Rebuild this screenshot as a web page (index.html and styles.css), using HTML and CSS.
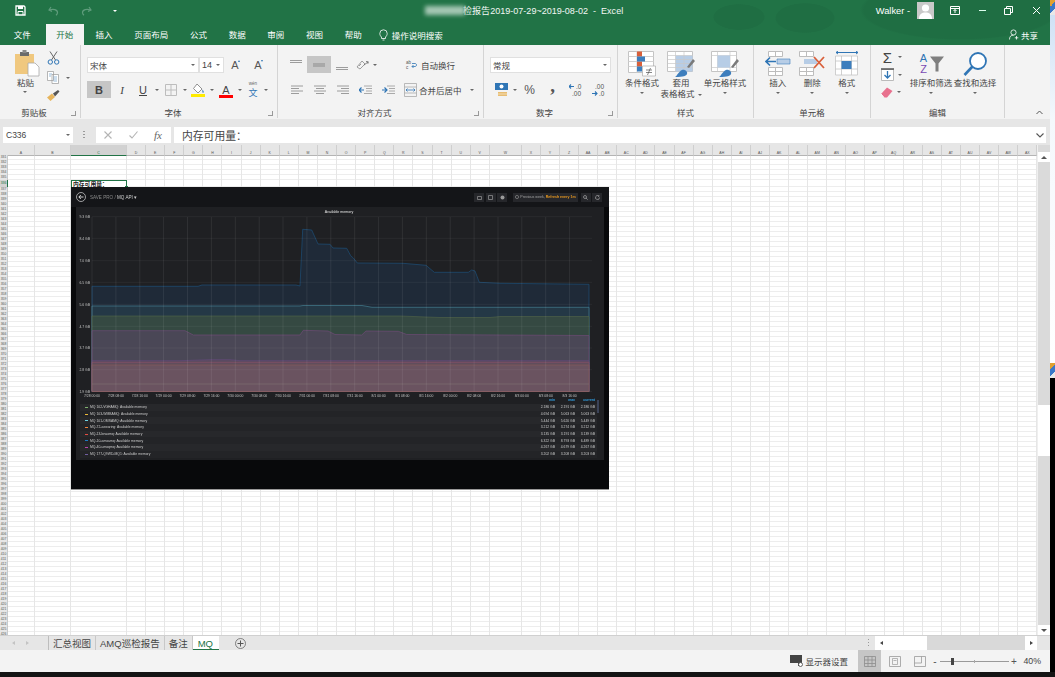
FILE: index.html
```html
<!DOCTYPE html>
<html lang="zh-CN">
<head>
<meta charset="utf-8">
<title>巡检报告2019-07-29~2019-08-02 - Excel</title>
<link rel="stylesheet" href="styles.css">
</head>
<body>
<div class="screen">
<div class="top">
<div class="app">

<header class="head">
  <div class="titlebar">
    <div class="qat">
      <svg class="q-save" width="11" height="11" viewBox="0 0 11 11"><path d="M1 1h8l1 1v8H1z" fill="none" stroke="#fff" stroke-width="1.3"/><path d="M3 1h5v3H3z" fill="#fff"/><path d="M3 10V6.5h5V10" fill="none" stroke="#fff"/></svg>
      <svg class="q-undo" width="11" height="10" viewBox="0 0 11 10"><path d="M3 1 1 4l3 1.5M1.5 4C5 2.5 9.5 3.5 9.5 6.5c0 1-.6 2-1.5 2.7" fill="none" stroke="#5f9c7c" stroke-width="1.2"/></svg>
      <svg class="q-redo" width="11" height="10" viewBox="0 0 11 10"><path d="M8 1l2 3-3 1.5M9.5 4C6 2.5 1.5 3.5 1.5 6.5c0 1 .6 2 1.5 2.7" fill="none" stroke="#5f9c7c" stroke-width="1.2"/></svg>
      <i class="caret white q-more"></i>
    </div>
    <div class="doc"><span class="masked"></span><span class="doc-t">检报告2019-07-29~2019-08-02&nbsp; -&nbsp; Excel</span></div>
    <div class="win">
      <span class="user">Walker -</span>
      <svg class="avatar" width="17" height="17" viewBox="0 0 17 17"><rect width="17" height="17" fill="#c9c9c9"/><circle cx="8.5" cy="6" r="3.6" fill="#fff"/><path d="M2 17c0-5 3-6.5 6.5-6.5S15 12 15 17z" fill="#fff"/></svg>
      <svg class="w-ribbon" width="10" height="9" viewBox="0 0 10 9"><path d="M.5.500h9v8h-9zM.5 2.500h9" fill="none" stroke="#fff"/><path d="M5 7V3.500M3.500 5 5 3.500 6.500 5" fill="none" stroke="#fff"/></svg>
      <svg class="w-min" width="9" height="9" viewBox="0 0 9 9"><path d="M1 4.500h7" stroke="#dfe" stroke-width="1"/></svg>
      <svg class="w-rest" width="9" height="9" viewBox="0 0 9 9"><path d="M.5 2.500h6v6h-6zM2.500 2.500v-2h6v6h-2" fill="none" stroke="#fff"/></svg>
      <svg class="w-close" width="9" height="9" viewBox="0 0 9 9"><path d="M1 1l7 7M8 1 1 8" stroke="#fff"/></svg>
    </div>
  </div>
  <nav class="tabs">
    <span class="tab">文件</span>
    <span class="tab active">开始</span>
    <span class="tab">插入</span>
    <span class="tab">页面布局</span>
    <span class="tab">公式</span>
    <span class="tab">数据</span>
    <span class="tab">审阅</span>
    <span class="tab">视图</span>
    <span class="tab">帮助</span>
    <span class="tell">
      <svg width="9" height="12" viewBox="0 0 9 12"><path d="M2.500 8C1.500 7 .8 6 .8 4.500a3.700 3.700 0 0 1 7.400 0C8.200 6 7.500 7 6.500 8v1.500h-4zM3.500 11h2" fill="none" stroke="#fff" stroke-width=".8"/></svg>
      操作说明搜索
    </span>
    <span class="share">
      <svg width="10" height="11" viewBox="0 0 10 11"><circle cx="4.500" cy="3.500" r="2.600" fill="none" stroke="#fff" stroke-width=".8"/><path d="M.5 10.500c0-3 1.500-4.400 4-4.400M7.500 7v3.500M5.800 8.800h3.500" fill="none" stroke="#fff" stroke-width=".8"/></svg>
      共享
    </span>
  </nav>
</header>

<section class="ribbon">

  <div class="group g1">
    <div class="body clip">
      <div class="paste">
        <svg width="26" height="28" viewBox="0 0 26 28"><path d="M1 5h19v20H1z" fill="#f0c87f"/><path d="M6 3h9v4H6z" fill="#6b6b6b"/><path d="M8.500 1h4v3h-4z" fill="#8a8a8a"/><path d="M14 14h7l4 4v9H14z" fill="#fff" stroke="#a8a8a8" stroke-width=".8"/></svg>
        <span class="lbl">粘贴</span>
        <i class="caret"></i>
      </div>
      <div class="clip-tools">
        <svg width="13" height="14" viewBox="0 0 13 14"><path d="M3 .5 8.500 9M10 .5 4.500 9" stroke="#666" fill="none"/><circle cx="3.300" cy="11" r="2.200" fill="none" stroke="#2f75b5"/><circle cx="9.700" cy="11" r="2.200" fill="none" stroke="#2f75b5"/></svg>
        <span class="copyline">
          <svg width="12" height="13" viewBox="0 0 12 13"><path d="M.5.500h6v9h-6zM5 3.500h6.500v9H5z" fill="#fff" stroke="#9a9a9a" stroke-width=".7"/><path d="M2 3h3M2 5h2M6.500 6h3.500M6.500 8h3.500M6.500 10h3.500" stroke="#6f9fc9" stroke-width=".7"/></svg>
          <i class="caret"></i>
        </span>
        <svg width="13" height="11" viewBox="0 0 13 11"><path d="M0 7.500 5 3.500 8 7 3.500 11z" fill="#e6b45c"/><path d="M6 3.500 11 0l1.500 1.500L8 6.500z" fill="#555"/></svg>
      </div>
    </div>
    <div class="glabel shift">剪贴板<i class="launch"></i></div>
  </div>

  <div class="group g2">
    <div class="body rows2">
      <div class="line">
        <div class="select w112"><span>宋体</span><i class="caret"></i></div>
        <div class="select w25"><span>14</span><i class="caret"></i></div>
        <span class="ib w23 grow-a">A<em class="up"></em></span>
        <span class="ib w23 grow-a">A<em class="down"></em></span>
      </div>
      <div class="line">
        <span class="ib w24 on bold">B</span>
        <span class="ib w22 ital">I</span>
        <span class="ib w20 under">U</span>
        <span class="cb w8"><i class="caret"></i></span>
        <span class="ib w20"><svg width="12" height="12" viewBox="0 0 12 12"><path d="M.5.500h11v11H.5zM6 .5v11M.5 6h11" fill="none" stroke="#bdbdbd"/></svg></span>
        <span class="cb w7"><i class="caret"></i></span>
        <span class="ib w20"><svg width="14" height="14" viewBox="0 0 14 14"><path d="M6 1 11 6 7 10 2.500 5.500z" fill="#fff" stroke="#777" stroke-width=".8"/><path d="M11.500 6.500c1 1.500 1.500 2 1 3s-1.500 0-1-3z" fill="#2f75b5"/><path d="M0 11h14v3H0z" fill="#ffeb00"/></svg></span>
        <span class="cb w7"><i class="caret"></i></span>
        <span class="ib w22 fcolor">A</span>
        <span class="cb w6"><i class="caret"></i></span>
        <span class="ib w20 wen"><small>wén</small><b>文</b></span>
        <span class="cb w6"><i class="caret"></i></span>
      </div>
    </div>
    <div class="glabel shift">字体<i class="launch"></i></div>
  </div>

  <div class="group g3">
    <div class="body rows2">
      <div class="line">
        <span class="ib w22"><svg width="12" height="12" viewBox="0 0 12 12"><path d="M0 1.500h12M0 3.500h12" stroke="#9c9c9c"/></svg></span>
        <span class="ib w24 on"><svg width="12" height="12" viewBox="0 0 12 12"><path d="M0 5h12M0 7h12" stroke="#8b8b8b"/></svg></span>
        <span class="ib w22"><svg width="12" height="12" viewBox="0 0 12 12"><path d="M0 8.500h12M0 10.500h12" stroke="#9c9c9c"/></svg></span>
        <span class="ib w19"><svg width="13" height="11" viewBox="0 0 13 11"><path d="M1 8 6 2l3 3-5 5zM3 7l2-2" fill="none" stroke="#888" stroke-width=".8"/><path d="M8 6l4-3M10 2.500l2.300.3-.5 2" fill="none" stroke="#666" stroke-width=".8"/></svg></span>
        <span class="cb w6"><i class="caret"></i></span>
        <span class="txt wrap"><svg width="11" height="11" viewBox="0 0 11 11"><path d="M6 7.500H9c2 0 2-3 0-3H6M7.500 6 6 7.500 7.500 9" fill="none" stroke="#2f75b5" stroke-width=".8"/></svg><span class="abc">ab<br>c</span>自动换行</span>
      </div>
      <div class="line">
        <span class="ib w23"><svg width="12" height="10" viewBox="0 0 12 10"><path d="M0 1h12M0 3.500h8M0 6h12M0 8.500h8" stroke="#9c9c9c"/></svg></span>
        <span class="ib w23"><svg width="12" height="10" viewBox="0 0 12 10"><path d="M0 1h12M2 3.500h8M0 6h12M2 8.500h8" stroke="#9c9c9c"/></svg></span>
        <span class="ib w23"><svg width="12" height="10" viewBox="0 0 12 10"><path d="M0 1h12M4 3.500h8M0 6h12M4 8.500h8" stroke="#9c9c9c"/></svg></span>
        <span class="ib w23"><svg width="13" height="10" viewBox="0 0 13 10"><path d="M5 1h8M7 3.500h6M7 6h6M5 8.500h8" stroke="#aaa"/><path d="M0 5h5M2.500 2.500 0 5l2.500 2.500" fill="none" stroke="#2f75b5" stroke-width="1.200"/></svg></span>
        <span class="ib w23"><svg width="13" height="10" viewBox="0 0 13 10"><path d="M5 1h8M7 3.500h6M7 6h6M5 8.500h8" stroke="#aaa"/><path d="M0 5h5M2.500 2.500 5 5 2.500 7.500" fill="none" stroke="#2f75b5" stroke-width="1.200"/></svg></span>
        <span class="txt merge"><svg width="13" height="14" viewBox="0 0 13 14"><path d="M.5.500h12v13H.5zM.5 4h12M.5 10h12" fill="none" stroke="#aaa" stroke-width=".8"/><path d="M2 7h9M3.500 5.500 2 7l1.500 1.500M9.500 5.500 11 7 9.500 8.500" fill="none" stroke="#2f75b5" stroke-width=".8"/></svg>合并后居中<i class="caret"></i></span>
      </div>
    </div>
    <div class="glabel shift">对齐方式<i class="launch"></i></div>
  </div>

  <div class="group g4">
    <div class="body rows2">
      <div class="line"><div class="select w121"><span>常规</span><i class="caret"></i></div></div>
      <div class="line">
        <span class="ib w22"><svg width="13" height="14" viewBox="0 0 13 14"><path d="M0 0h13v7H0z" fill="#2f75b5"/><circle cx="6.500" cy="3.500" r="2" fill="#fff"/><path d="M3 9h9v4H3z" fill="#e8bd72"/><path d="M3 11h9" stroke="#fff" stroke-width=".5"/></svg></span>
        <span class="cb w6"><i class="caret"></i></span>
        <span class="ib w23 pct">%</span>
        <span class="ib w23 comma">,</span>
        <span class="ib w23"><svg class="dec" width="14" height="14" viewBox="0 0 14 14"><path d="M0 3.500h5M2 1.500 0 3.500l2 2" fill="none" stroke="#2f75b5" stroke-width="1.100"/><text x="7" y="6" class="dectxt">.0</text><text x="3" y="13" class="dectxt">.00</text></svg></span>
        <span class="ib w23"><svg class="dec" width="14" height="14" viewBox="0 0 14 14"><text x="3" y="6" class="dectxt">.00</text><path d="M0 10.500h5M3 8.500l2 2-2 2" fill="none" stroke="#2f75b5" stroke-width="1.100"/><text x="7" y="13" class="dectxt">.0</text></svg></span>
      </div>
    </div>
    <div class="glabel shift">数字<i class="launch"></i></div>
  </div>

  <div class="group g5">
    <div class="body bigs">
      <div class="big w40">
        <svg width="28" height="26" viewBox="0 0 28 26"><path d="M.5.500h25v21H.5z" fill="#fff" stroke="#c4c4c4"/><path d="M9 .5v21M.5 5.500h25M.5 10.500h25M.5 15.500h25" stroke="#d2d2d2"/><path d="M9 .5h5v5H9zM9 10.500h5v5H9z" fill="#d9603b"/><path d="M9 5.500h8v5H9zM9 15.500h5v5H9z" fill="#3d7ebd"/><path d="M14.500 15h13v10h-13z" fill="#fff" stroke="#aaa" stroke-width=".7"/><path d="M18 19h6M18 21.500h6M22.500 17l-3 7" stroke="#555" stroke-width=".7"/></svg>
        <span class="lbl">条件格式</span><i class="caret"></i>
      </div>
      <div class="big w38">
        <svg width="28" height="26" viewBox="0 0 28 26"><path d="M.5.500h25v20H.5z" fill="#fff" stroke="#c4c4c4"/><path d="M8.500 4.500h17v16h-17z" fill="#b7cde6"/><path d="M.5 4.500h25M.5 8.500h25M.5 12.500h25M.5 16.500h25M8.500.5v20M17 .5v20" stroke="#c9c9c9" stroke-width=".7"/><path d="M20 16l6-8 2 2-6 7z" fill="#7a7a7a"/><path d="M8 26c2-1 4-6 7-7s6 2 5 4-3 3-12 3z" fill="#3d7ebd"/></svg>
        <span class="lbl">套用</span><span class="lbl">表格格式<i class="caret in"></i></span>
      </div>
      <div class="big w50">
        <svg width="28" height="26" viewBox="0 0 28 26"><path d="M.5.500h25v20H.5z" fill="#fff" stroke="#c4c4c4"/><path d="M.5 4.500h25M.5 16.500h25M6.500.5v20M19 .5v20" stroke="#c9c9c9" stroke-width=".7"/><path d="M6.500 4.500H19v12H6.500z" fill="#b7cde6"/><path d="M20 16l6-8 2 2-6 7z" fill="#7a7a7a"/><path d="M8 26c2-1 4-6 7-7s6 2 5 4-3 3-12 3z" fill="#3d7ebd"/></svg>
        <span class="lbl">单元格样式</span><i class="caret"></i>
      </div>
    </div>
    <div class="glabel">样式</div>
  </div>

  <div class="group g6">
    <div class="body bigs">
      <div class="big w345">
        <svg width="26" height="26" viewBox="0 0 26 26"><path d="M3.500.5h14v5h-14zM3.500 16.500h14v8h-14zM10.500 16.500v8M3.500 20.500h14M10.500.5v5" fill="#fff" stroke="#bdbdbd"/><path d="M12 8h13v5H12z" fill="#b7cde6" stroke="#3d7ebd" stroke-width=".6"/><path d="M11 10.500H1M5 6.500l-4 4 4 4" fill="none" stroke="#2f75b5" stroke-width="1.600"/></svg>
        <span class="lbl">插入</span><i class="caret"></i>
      </div>
      <div class="big w345">
        <svg width="26" height="26" viewBox="0 0 26 26"><path d="M.5.500h14v5H.5zM.5 16.500h14v8H.5zM7.500 16.500v8M.5 20.500h14M7.500.5v5" fill="#fff" stroke="#bdbdbd"/><path d="M5 8h13v5H5z" fill="#b7cde6"/><path d="M15 6l10 11M25 6 15 17" stroke="#d9603b" stroke-width="1.800"/></svg>
        <span class="lbl">删除</span><i class="caret"></i>
      </div>
      <div class="big w345">
        <svg width="24" height="26" viewBox="0 0 24 26"><path d="M1 1.500h22M3 0 1 1.500 3 3M21 0l2 1.500L21 3" fill="none" stroke="#2f75b5"/><path d="M.5 5h22v19H.5zM.5 10h22M.5 18h22M6.500 5v19M16.500 5v19" fill="#fff" stroke="#c4c4c4" stroke-width=".8"/><path d="M6.500 10h10v8h-10z" fill="#3d7ebd"/></svg>
        <span class="lbl">格式</span><i class="caret"></i>
      </div>
    </div>
    <div class="glabel">单元格</div>
  </div>

  <div class="group g7">
    <div class="body bigs">
      <div class="stack">
        <span class="sline"><b class="sigma">Σ</b><i class="caret"></i></span>
        <span class="sline"><svg width="13" height="13" viewBox="0 0 13 13"><path d="M.5 1.500h12v11H.5z" fill="#fff" stroke="#bbb"/><path d="M0 1h13" stroke="#555" stroke-width="1.500"/><path d="M6.500 3v7M3.500 7l3 3 3-3" fill="none" stroke="#2f75b5" stroke-width="1.300"/></svg><i class="caret"></i></span>
        <span class="sline"><svg width="12" height="11" viewBox="0 0 12 11"><path d="M0 7 6 .5 11.500 4 6 10.500H3z" fill="#e8718e"/><path d="M0 7l3 3.500" stroke="#fff"/></svg><i class="caret"></i></span>
      </div>
      <div class="big w44">
        <span class="sorticon"><span class="az"><b class="a">A</b><b class="z">Z</b></span><svg width="14" height="15" viewBox="0 0 14 15"><path d="M0 0h14L8.500 7v8h-3V7z" fill="#7f7f7f"/></svg></span>
        <span class="lbl">排序和筛选</span><i class="caret"></i>
      </div>
      <div class="big w44">
        <svg width="25" height="25" viewBox="0 0 25 25"><circle cx="15" cy="9.500" r="8" fill="#fff" stroke="#2f75b5" stroke-width="1.800"/><path d="M9.500 15 1.500 23.500" stroke="#2f75b5" stroke-width="2.600"/></svg>
        <span class="lbl">查找和选择</span><i class="caret"></i>
      </div>
    </div>
    <div class="glabel">编辑</div>
  </div>

  <div class="collapse">
    <svg width="7" height="5" viewBox="0 0 7 5"><path d="M.5 4 3.500 1l3 3" fill="none" stroke="#555"/></svg>
  </div>
</section>

<section class="fbar">
  <div class="namebox"><span>C336</span><i class="caret"></i></div>
  <span class="dots"></span>
  <div class="fbtns">
    <svg width="8" height="8" viewBox="0 0 8 8"><path d="M.5.500l7 7M7.500.5l-7 7" stroke="#b4b4b4" stroke-width="1.100"/></svg>
    <svg width="9" height="8" viewBox="0 0 9 8"><path d="M.5 4.500 3 7 8.500.5" fill="none" stroke="#b4b4b4" stroke-width="1.100"/></svg>
    <em>fx</em>
  </div>
  <div class="finput"><span>内存可用量：</span>
    <svg width="8" height="5" viewBox="0 0 8 5"><path d="M.5.500 4 4 7.500.5" fill="none" stroke="#555" stroke-width="1.100"/></svg>
  </div>
</section>

<section class="work">
  <div class="sheet">
    <div class="rowsl">
      <div class="corner"></div>
      <div class="row"><b>331</b></div><div class="row"><b>332</b></div><div class="row"><b>333</b></div><div class="row"><b>334</b></div><div class="row"><b>335</b></div>
      <div class="row tall"><b>336</b></div>
      <div class="row"><b>337</b></div><div class="row"><b>338</b></div><div class="row"><b>339</b></div><div class="row"><b>340</b></div>
      <div class="row"><b>341</b></div><div class="row"><b>342</b></div><div class="row"><b>343</b></div><div class="row"><b>344</b></div><div class="row"><b>345</b></div><div class="row"><b>346</b></div><div class="row"><b>347</b></div><div class="row"><b>348</b></div><div class="row"><b>349</b></div><div class="row"><b>350</b></div>
      <div class="row"><b>351</b></div><div class="row"><b>352</b></div><div class="row"><b>353</b></div><div class="row"><b>354</b></div><div class="row"><b>355</b></div><div class="row"><b>356</b></div><div class="row"><b>357</b></div><div class="row"><b>358</b></div><div class="row"><b>359</b></div><div class="row"><b>360</b></div>
      <div class="row"><b>361</b></div><div class="row"><b>362</b></div><div class="row"><b>363</b></div><div class="row"><b>364</b></div><div class="row"><b>365</b></div><div class="row"><b>366</b></div><div class="row"><b>367</b></div><div class="row"><b>368</b></div><div class="row"><b>369</b></div><div class="row"><b>370</b></div>
      <div class="row"><b>371</b></div><div class="row"><b>372</b></div><div class="row"><b>373</b></div><div class="row"><b>374</b></div><div class="row"><b>375</b></div><div class="row"><b>376</b></div><div class="row"><b>377</b></div><div class="row"><b>378</b></div><div class="row"><b>379</b></div><div class="row"><b>380</b></div>
      <div class="row"><b>381</b></div><div class="row"><b>382</b></div><div class="row"><b>383</b></div><div class="row"><b>384</b></div><div class="row"><b>385</b></div><div class="row"><b>386</b></div><div class="row"><b>387</b></div><div class="row"><b>388</b></div><div class="row"><b>389</b></div><div class="row"><b>390</b></div>
      <div class="row"><b>391</b></div><div class="row"><b>392</b></div><div class="row"><b>393</b></div><div class="row"><b>394</b></div><div class="row"><b>395</b></div><div class="row"><b>396</b></div><div class="row"><b>397</b></div><div class="row"><b>398</b></div><div class="row"><b>399</b></div><div class="row"><b>400</b></div>
      <div class="row"><b>401</b></div><div class="row"><b>402</b></div><div class="row"><b>403</b></div><div class="row"><b>404</b></div><div class="row"><b>405</b></div><div class="row"><b>406</b></div><div class="row"><b>407</b></div><div class="row"><b>408</b></div><div class="row"><b>409</b></div><div class="row"><b>410</b></div>
      <div class="row"><b>411</b></div><div class="row"><b>412</b></div><div class="row"><b>413</b></div><div class="row"><b>414</b></div><div class="row"><b>415</b></div><div class="row"><b>416</b></div><div class="row"><b>417</b></div><div class="row"><b>418</b></div><div class="row"><b>419</b></div><div class="row"><b>420</b></div>
      <div class="row"><b>421</b></div><div class="row"><b>422</b></div><div class="row"><b>423</b></div><div class="row"><b>424</b></div><div class="row"><b>425</b></div><div class="row"><b>426</b></div>
    </div>
    <div class="colsl">
      <div class="col ca"><span>A</span></div><div class="col cb2"><span>B</span></div><div class="col cc"><span class="cur">C</span></div>
      <div class="col"><span>D</span></div><div class="col"><span>E</span></div><div class="col"><span>F</span></div><div class="col"><span>G</span></div><div class="col"><span>H</span></div><div class="col"><span>I</span></div><div class="col"><span>J</span></div><div class="col"><span>K</span></div><div class="col"><span>L</span></div><div class="col"><span>M</span></div><div class="col"><span>N</span></div><div class="col"><span>O</span></div><div class="col"><span>P</span></div><div class="col"><span>Q</span></div><div class="col"><span>R</span></div><div class="col"><span>S</span></div><div class="col"><span>T</span></div><div class="col"><span>U</span></div><div class="col"><span>V</span></div>
      <div class="col cw"><span>W</span></div>
      <div class="col"><span>X</span></div><div class="col"><span>Y</span></div><div class="col"><span>Z</span></div><div class="col"><span>AA</span></div><div class="col"><span>AB</span></div><div class="col"><span>AC</span></div><div class="col"><span>AD</span></div><div class="col"><span>AE</span></div><div class="col"><span>AF</span></div><div class="col"><span>AG</span></div><div class="col"><span>AH</span></div><div class="col"><span>AI</span></div><div class="col"><span>AJ</span></div><div class="col"><span>AK</span></div><div class="col"><span>AL</span></div><div class="col"><span>AM</span></div><div class="col"><span>AN</span></div><div class="col"><span>AO</span></div><div class="col"><span>AP</span></div><div class="col"><span>AQ</span></div><div class="col"><span>AR</span></div><div class="col"><span>AS</span></div><div class="col"><span>AT</span></div><div class="col"><span>AU</span></div><div class="col"><span>AV</span></div><div class="col"><span>AW</span></div><div class="col"><span>AX</span></div>
    </div>

    <div class="selcell">内存可用量：<i></i></div>

    <div class="pic">
      <div class="dhead">
        <svg class="back" width="10" height="10" viewBox="0 0 10 10"><circle cx="5" cy="5" r="4.500" fill="none" stroke="#d8d8d8" stroke-width=".7"/><path d="M7.500 5H3M4.800 3 2.800 5l2 2" fill="none" stroke="#e8e8e8" stroke-width=".9"/></svg>
        <span class="crumb">SAVE PRO / <b>MQ API ▾</b></span>
        <span class="dbtn b1"><svg width="5" height="5" viewBox="0 0 5 5"><path d="M.5 4.500v-3h4v3z" fill="none" stroke="#9a9a9a" stroke-width=".7"/></svg></span>
        <span class="dbtn"><svg width="5" height="5" viewBox="0 0 5 5"><path d="M.5.500h4v4h-4z" fill="none" stroke="#9a9a9a" stroke-width=".7"/></svg></span>
        <span class="dbtn"><svg width="5" height="5" viewBox="0 0 5 5"><circle cx="2.500" cy="2.500" r="2" fill="#9a9a9a"/></svg></span>
        <span class="dbtn picker"><svg width="4" height="4" viewBox="0 0 4 4"><circle cx="2" cy="2" r="1.600" fill="none" stroke="#9a9a9a" stroke-width=".6"/></svg>Previous week, <b>Refresh every 1m</b></span>
        <span class="dbtn"><svg width="5" height="5" viewBox="0 0 5 5"><circle cx="2" cy="2" r="1.500" fill="none" stroke="#bbb" stroke-width=".6"/><path d="M3 3l1.700 1.700" stroke="#bbb" stroke-width=".6"/></svg></span>
        <span class="dbtn"><svg width="5" height="5" viewBox="0 0 5 5"><path d="M4.500 2.500a2 2 0 1 1-.7-1.500M4 .3V1.300H3" fill="none" stroke="#bbb" stroke-width=".6"/></svg></span>
      </div>
      <div class="panel">
        <svg class="chart" width="528" height="190" viewBox="76 207 528 190">
          <text x="339" y="212.500" class="ptitle">Available memory</text>
          <path class="a1" d="M92 286.300H198L202 285H296L300 286L302.700 229.300L311.700 230L318 244L330 244.300L333 248L346.700 248.300L350.700 255.700L353.300 258L357.300 263L403 263.300L426 265.300L434.300 272.300L468.300 272.300L471.700 270L475 271L479.300 282.300L500 283.300L589 284.300V391.500H92Z"/>
          <path class="a2" d="M92 306H300L303 305.500H362L372 307.300H589V391.500H92Z"/>
          <path class="a3" d="M92 316H400L440 317.500H490L500 316.500H589V391.500H92Z"/>
          <path class="a4" d="M92 330.700H185L193.300 335H300L303.300 330.300L328 331L335 334.500L361.700 335L366 331L398.300 331.300L406.700 334.500L589 335.500V391.500H92Z"/>
          <path class="a5" d="M92 360.700H180L210 359.700H230L240 360.700H589V391.500H92Z"/>
          <path class="a6" d="M92 362.300H589V391.500H92Z"/>
          <path class="a7" d="M92 365H589V391.500H92Z"/>
          <path class="bl" d="M92 384H589"/>
          <path class="gh" d="M92 216.700H592M92 238.300H592M92 260.700H592M92 282.300H592M92 304.300H592M92 326.300H592M92 348H592M92 369.700H592M92 391.500H592"/>
          <path class="gv" d="M92 217V391.500M115.900 217V391.500M139.800 217V391.500M163.600 217V391.500M187.500 217V391.500M211.400 217V391.500M235.300 217V391.500M259.200 217V391.500M283 217V391.500M306.900 217V391.500M330.800 217V391.500M354.700 217V391.500M378.600 217V391.500M402.400 217V391.500M426.300 217V391.500M450.200 217V391.500M474.100 217V391.500M498 217V391.500M521.800 217V391.500M545.700 217V391.500M569.600 217V391.500"/>
          <g class="ylab">
            <text x="90" y="218">9.3 GB</text><text x="90" y="239.600">8.4 GB</text><text x="90" y="262">7.0 GB</text><text x="90" y="283.600">6.5 GB</text><text x="90" y="305.600">5.6 GB</text><text x="90" y="327.600">4.7 GB</text><text x="90" y="349.300">3.7 GB</text><text x="90" y="371">2.8 GB</text><text x="90" y="392.500">1.9 GB</text>
          </g>
          <g class="xlab">
            <text x="92" y="396.500">7/28 00:00</text><text x="115.900" y="396.500">7/28 08:00</text><text x="139.800" y="396.500">7/28 16:00</text><text x="163.600" y="396.500">7/29 00:00</text><text x="187.500" y="396.500">7/29 08:00</text><text x="211.400" y="396.500">7/29 16:00</text><text x="235.300" y="396.500">7/30 00:00</text><text x="259.200" y="396.500">7/30 08:00</text><text x="283" y="396.500">7/30 16:00</text><text x="306.900" y="396.500">7/31 00:00</text><text x="330.800" y="396.500">7/31 08:00</text><text x="354.700" y="396.500">7/31 16:00</text><text x="378.600" y="396.500">8/1 00:00</text><text x="402.400" y="396.500">8/1 08:00</text><text x="426.300" y="396.500">8/1 16:00</text><text x="450.200" y="396.500">8/2 00:00</text><text x="474.100" y="396.500">8/2 08:00</text><text x="498" y="396.500">8/2 16:00</text><text x="521.800" y="396.500">8/3 00:00</text><text x="545.700" y="396.500">8/3 08:00</text><text x="569.600" y="396.500">8/3 16:00</text>
          </g>
        </svg>
        <div class="legend">
          <div class="lg-head"><span>min</span><span>max</span><span>current</span></div>
          <div class="lg"><i class="s-green"></i><em>MQ 102-VGHAMQ: Available memory</em><span>2.186 GB</span><span>2.191 GB</span><span>2.186 GB</span></div>
          <div class="lg"><i class="s-yellow"></i><em>MQ 103-WMBAMQ: Available memory</em><span>4.694 GB</span><span>5.063 GB</span><span>5.063 GB</span></div>
          <div class="lg"><i class="s-cyan"></i><em>MQ 101-OMSAMQ: Available memory</em><span>5.444 GB</span><span>5.620 GB</span><span>5.449 GB</span></div>
          <div class="lg"><i class="s-orange"></i><em>MQ-72-aewaring: Available memory</em><span>3.212 GB</span><span>3.274 GB</span><span>3.212 GB</span></div>
          <div class="lg"><i class="s-red"></i><em>MQ-13-bnaomq: Available memory</em><span>3.135 GB</span><span>3.191 GB</span><span>3.139 GB</span></div>
          <div class="lg"><i class="s-blue"></i><em>MQ-10-amoamq: Available memory</em><span>6.322 GB</span><span>8.793 GB</span><span>6.489 GB</span></div>
          <div class="lg"><i class="s-purple"></i><em>MQ-40-umoqmq: Available memory</em><span>4.267 GB</span><span>4.679 GB</span><span>4.267 GB</span></div>
          <div class="lg"><i class="s-violet"></i><em>MQ 177-Q9WD-MQ1: Available memory</em><span>3.202 GB</span><span>3.208 GB</span><span>3.203 GB</span></div>
          <i class="lg-scroll"></i>
        </div>
      </div>
    </div>
  </div>
  <div class="vscroll">
    <span class="sbtn"><i class="tri-up"></i></span>
    <span class="vthumb"></span>
    <span class="sbtn end"><i class="tri-down"></i></span>
  </div>
</section>

<section class="sheetbar">
  <div class="snav"><i class="tri-l"></i><i class="tri-r"></i></div>
  <span class="stab">汇总视图</span>
  <span class="stab">AMQ巡检报告</span>
  <span class="stab">备注</span>
  <span class="stab cur">MQ</span>
  <svg class="addsheet" width="11" height="11" viewBox="0 0 11 11"><circle cx="5.500" cy="5.500" r="5" fill="none" stroke="#666" stroke-width=".8"/><path d="M5.500 2.500v6M2.500 5.500h6" stroke="#555"/></svg>
  <span class="hdots"></span>
  <div class="hscroll">
    <span class="hbtn"><i class="tri-l dark"></i></span>
    <span class="hthumb"></span>
    <span class="hbtn right"><i class="tri-r dark"></i></span>
  </div>
</section>

<footer class="status">
  <span class="display">
    <svg width="14" height="12" viewBox="0 0 14 12"><path d="M0 0h12v8H0z" fill="#444"/><path d="M8 8h4v3H8z" fill="#444"/><circle cx="10.500" cy="9.500" r="2" fill="#fff" stroke="#444" stroke-width=".8"/></svg>
    显示器设置
  </span>
  <span class="view on"><svg width="12" height="11" viewBox="0 0 12 11"><path d="M.5.500h11v10H.5zM4 .5v10M8 .5v10M.5 4h11M.5 7.500h11" fill="none" stroke="#8d8d8d" stroke-width=".8"/></svg></span>
  <span class="view"><svg width="12" height="11" viewBox="0 0 12 11"><path d="M.5.500h11v10H.5z" fill="none" stroke="#999" stroke-width=".8"/><path d="M3.500 2.500h5v6h-5zM4.500 4.500h3" fill="none" stroke="#999" stroke-width=".7"/></svg></span>
  <span class="view"><svg width="12" height="11" viewBox="0 0 12 11"><path d="M.5.500h11v10H.5zM.5 7h7V.5" fill="none" stroke="#999" stroke-width=".8"/></svg></span>
  <span class="zm">-</span>
  <span class="slider"><i class="tick"></i><i class="knob"></i></span>
  <span class="zm">+</span>
  <span class="pct40">40%</span>
</footer>
</div>

<aside class="edge">
  <span class="edge-i"></span>
  <span class="edge-g"></span>
  <span class="edge-i"></span>
  <span class="edge-k"></span>
</aside>
</div>
<div class="taskbar"></div>
</div>
</body>
</html>
```

FILE: styles.css
```css
* { box-sizing: border-box; }
html, body { margin: 0; padding: 0; }
body { width: 1055px; height: 677px; overflow: hidden; background: #111; font-family: "Liberation Sans", "Noto Sans CJK SC", sans-serif; color: #444; }
.screen { width: 1055px; height: 677px; display: flex; flex-direction: column; }
.top { display: flex; height: 672px; }
.app { width: 1050px; height: 672px; display: flex; flex-direction: column; background: #f3f3f3; }
.taskbar { height: 5px; background: #141414; }
.edge { width: 5px; display: flex; flex-direction: column; }
.edge-i { height: 15px; background: linear-gradient(135deg, #e0a030 0 35%, #3a78c8 35% 70%, #e8e8e8 70%); }
.edge-g { height: 348px; background: linear-gradient(#cfe1f5, #f4f8fc 30%, #fff); }
.edge-k { flex: 1; background: #000; }

/* caret */
.caret { display: inline-block; width: 0; height: 0; border-left: 2px solid transparent; border-right: 2px solid transparent; border-top: 2.5px solid #666; flex: none; }
.caret.white { border-top-color: #fff; }
.caret.in { margin-left: 3px; vertical-align: middle; }

/* header */
.head { height: 45px; color: #fff; background-color: #217346; background-image: radial-gradient(ellipse 26px 13px at 739px 17px, #1f6e43 0 96%, transparent), radial-gradient(ellipse 30px 15px at 805px 18px, #1f6e43 0 96%, transparent), radial-gradient(ellipse 100px 30px at 960px 10px, #1f6e43 0 96%, transparent); }
.titlebar { height: 24px; display: flex; align-items: center; padding-bottom: 3px; }
.qat { display: flex; align-items: center; width: 425px; padding-left: 15px; }
.q-undo { margin-left: 22px; }
.q-redo { margin-left: 22px; }
.q-more { margin-left: 21px; }
.doc { display: flex; align-items: center; flex: 1; font-size: 9.050px; color: #f2f7f4; }
.masked { width: 40px; height: 9px; background: #a5c7b4; filter: blur(2px); }
.doc-t { white-space: nowrap; margin-left: -2px; }
.win { display: flex; align-items: center; font-size: 9.300px; padding-right: 9px; }
.user { margin-right: 7px; }
.avatar { margin-right: 16px; }
.w-ribbon { margin-right: 18px; }
.w-min { margin-right: 17px; }
.w-rest { margin-right: 19px; }
.w-close { margin-right: 0; }

.tabs { height: 21px; display: flex; align-items: stretch; padding-left: 3px; font-size: 8.500px; font-family: "Noto Sans CJK SC", sans-serif; }
.tab { padding: 0 10.850px; display: flex; align-items: center; line-height: 1; }
.tab.active { background: #f3f3f3; color: #217346; margin-left: 4px; width: 38px; padding: 0; justify-content: center; }
.tab.active + .tab { margin-left: 1px; }
.tell { display: flex; align-items: center; gap: 4px; margin-left: 6px; }
.share { display: flex; align-items: center; gap: 2px; margin-left: auto; margin-right: 12px; }

/* ribbon */
.ribbon { height: 74px; display: flex; background: #f3f3f3; font-family: "Noto Sans CJK SC", sans-serif; font-size: 8.500px; color: #444; }
.group { display: flex; flex-direction: column; border-right: 1px solid #d4d4d4; margin-bottom: 1px; }
.g1 { width: 81px; }
.g2 { width: 197px; }
.g3 { width: 206px; }
.g4 { width: 134px; }
.g5 { width: 136px; }
.g6 { width: 117px; }
.g7 { width: 134px; }
.body { height: 63px; }
.glabel { flex: 1; position: relative; text-align: center; line-height: 11px; color: #444; }
.glabel.shift { padding-right: 12px; }
.launch { position: absolute; right: 4px; bottom: 2px; width: 5px; height: 5px; border-left: 1px solid #999; border-top: 1px solid #999; transform: rotate(180deg); }
.collapse { flex: 1; display: flex; align-items: flex-end; justify-content: flex-end; padding: 0 7px 4px 0; }

.clip { display: flex; }
.paste { width: 45px; padding: 4px 0 0 14px; display: flex; flex-direction: column; align-items: flex-start; }
.paste .lbl { margin: 0 0 0 3px; line-height: 11px; }
.paste .caret { margin: 3px 0 0 9px; }
.clip-tools { display: flex; flex-direction: column; gap: 6px; padding: 6px 0 0 2px; }
.copyline { display: flex; align-items: center; gap: 7px; }

.rows2 { display: flex; flex-direction: column; gap: 8px; padding-top: 11px; }
.line { display: flex; height: 17px; align-items: center; }
.g2 .rows2, .g4 .rows2 { padding-left: 6px; }
.g3 .rows2 { padding-left: 7px; }
.select { height: 16px; background: #fff; border: 1px solid #e0e0e0; display: flex; align-items: center; justify-content: space-between; padding: 0 3px 0 2px; color: #444; font-size: 8.500px; }
.w112 { width: 112px; }
.w25 { width: 25px; font-family: "Liberation Sans", sans-serif; font-size: 9px; }
.w121 { width: 121px; }
.ib, .cb { display: flex; align-items: center; justify-content: center; height: 17px; flex: none; }
.w6 { width: 6px; } .w7 { width: 7px; } .w8 { width: 8px; } .w19 { width: 19px; } .w20 { width: 20px; } .w22 { width: 22px; } .w23 { width: 23px; } .w24 { width: 24px; }
.on { background: #c6c6c6; }
.grow-a { font-family: "Liberation Sans", sans-serif; font-size: 11px; color: #555; }
.up, .down { width: 0; height: 0; border-left: 1.500px solid transparent; border-right: 1.500px solid transparent; margin: -8px 0 0 -1px; }
.up { border-bottom: 2px solid #2f75b5; }
.down { border-top: 2px solid #2f75b5; }
.bold { font: 700 11px "Liberation Sans", sans-serif; color: #444; }
.ital { font: italic 11px "Liberation Serif", serif; color: #444; }
.under { font: 11px "Liberation Sans", sans-serif; text-decoration: underline; color: #444; }
.fcolor { font: 11px "Liberation Sans", sans-serif; color: #444; background: linear-gradient(#f00, #f00) center 14px / 14px 3px no-repeat; }
.wen { flex-direction: column; line-height: 1; color: #2f75b5; }
.wen small { font: 4.500px "Liberation Sans", sans-serif; color: #666; }
.wen b { font: 9px "Noto Sans CJK SC", sans-serif; }
.txt { display: flex; align-items: center; white-space: nowrap; }
.wrap { margin-left: 28px; }
.abc { width: 0; overflow: visible; font: 4.500px/5px "Liberation Sans", sans-serif; margin: 0 15px 0 -11px; color: #555; }
.merge { margin-left: 4px; gap: 2px; }
.merge .caret { margin-left: 6px; }
.pct { font: 12px "Liberation Sans", sans-serif; color: #555; }
.comma { font: 700 19px/1 "Liberation Serif", serif; color: #555; padding-bottom: 9px; }
.dectxt { font: 6.500px "Liberation Sans", sans-serif; fill: #555; }

.bigs { display: flex; padding-top: 6px; }
.g5 .bigs { padding-left: 4px; }
.g6 .bigs { padding-left: 6.500px; }
.big { display: flex; flex-direction: column; align-items: center; flex: none; white-space: nowrap; }
.big svg, .sorticon { height: 26px; flex: none; }
.big .lbl { line-height: 11px; height: 11px; }
.big > .caret { margin-top: 4px; }
.w40 { width: 40px; } .w38 { width: 38px; } .w50 { width: 50px; } .w345 { width: 34.500px; } .w44 { width: 44px; }
.stack { width: 38px; margin-top: -2.500px; padding-left: 10px; display: flex; flex-direction: column; }
.sline { height: 17.500px; display: flex; align-items: center; gap: 4px; }
.sigma { font: 400 15px "Liberation Sans", sans-serif; color: #444; width: 13px; text-align: center; }
.sorticon { display: flex; align-items: center; gap: 1px; }
.az { display: flex; flex-direction: column; width: 11px; font: 700 11px/11px "Liberation Sans", sans-serif; text-align: center; }
.az .a { color: #2f75b5; font-weight: 400; }
.az .z { color: #7a4bb5; font-weight: 400; }

/* formula bar */
.fbar { height: 26px; background: #e6e6e6; display: flex; align-items: flex-start; padding: 8px 4px 0 3px; }
.namebox { width: 70px; height: 16px; background: #fff; display: flex; align-items: center; justify-content: space-between; padding: 0 3px; font-size: 8.500px; color: #444; }
.dots { width: 2px; height: 8px; margin: 4px 11px 0 10px; background: repeating-linear-gradient(#9a9a9a 0 1px, transparent 1px 3px); }
.fbtns { width: 75px; height: 16px; background: #fff; display: flex; align-items: center; justify-content: space-between; padding: 0 9px 0 8px; }
.fbtns em { font: italic 11px "Liberation Serif", serif; color: #666; }
.finput { flex: 1; height: 16px; margin-left: 3px; background: #fff; display: flex; align-items: center; justify-content: space-between; padding: 0 2px 0 8px; font: 10.800px "Noto Sans CJK SC", sans-serif; color: #444; }

/* worksheet */
.work { height: 490px; display: flex; background: #fff; }
.sheet { position: relative; width: 1037px; height: 490px; overflow: hidden; display: grid; background: #fff; }
.rowsl, .colsl { grid-area: 1 / 1; }
.corner { height: 10px; width: 8px; background: #e6e6e6; }
.row { height: 5px; border-bottom: 1px solid #ededed; }
.row b { display: block; width: 8px; height: 5px; background: #e6e6e6; font: 400 3.400px/5px "Liberation Sans", sans-serif; color: #555; text-align: center; border-right: 1px solid #c9c9c9; }
.row.tall { height: 7px; }
.row.tall b { height: 7px; line-height: 7px; background: #d2d2d2; border-right: 1px solid #217346; color: #217346; }
.colsl { display: flex; padding-left: 8px; height: 490px; }
.col { width: 19.100px; flex: none; border-right: 1px solid #e6e6e6; }
.col.ca { width: 27px; } .col.cb2 { width: 36px; } .col.cc { width: 56px; } .col.cw { width: 32px; }
.col span { display: block; height: 11px; margin-right: -1px; padding-top: 6px; background: #e6e6e6; border-bottom: 1px solid #b4b4b4; border-right: 1px solid #cfcfcf; font: 3.500px/4px "Liberation Sans", sans-serif; color: #555; text-align: center; }
.col span.cur { background: #d2d2d2; border-bottom: 1px solid #217346; color: #217346; }
.selcell { position: absolute; left: 71px; top: 35px; width: 56px; height: 8px; border: 1px solid #217346; background: #fff; font: 700 5.800px/6px "Noto Sans CJK SC", sans-serif; color: #222; padding-left: 1px; }
.selcell i { position: absolute; right: -2px; bottom: -2px; width: 3px; height: 3px; background: #217346; }

/* picture */
.pic { position: absolute; left: 71px; top: 42px; width: 538px; height: 303px; background: #08090b; border-bottom: 1px solid #999; filter: blur(.3px); }
.dhead { height: 20px; background: #141518; display: flex; align-items: center; padding: 0 7px 0 5px; font-size: 4.600px; color: #8a8a8a; }
.back { margin-right: 4px; }
.crumb { flex: 1; white-space: nowrap; }
.crumb b { font-weight: 400; color: #cfcfcf; }
.dbtn { height: 9px; min-width: 10px; margin-left: 1.500px; background: #26272b; display: flex; align-items: center; justify-content: center; }
.b1 { margin-left: 0; }
.picker { width: 65px; margin: 0 1px 0 6px; gap: 1px; font-size: 3.600px; color: #a5a5a5; white-space: nowrap; }
.picker b { color: #eb9a1f; font-weight: 700; }
.panel { margin: 0 5px; width: 528px; height: 253px; background: #1f2023; }
.chart { display: block; }
.ptitle { font: 3.600px "Liberation Sans", sans-serif; fill: #e4e4e4; text-anchor: middle; }
.a1 { fill: #1f2a38; stroke: #1c4f78; stroke-width: .7; }
.a2 { fill: #243846; stroke: #4a8c9e; stroke-width: .6; }
.a3 { fill: #354942; stroke: #5a6c48; stroke-width: .5; }
.a4 { fill: #4a4756; stroke: #754b7c; stroke-width: .6; }
.a5 { fill: #5a4b5f; stroke: #674a82; stroke-width: .6; }
.a6 { fill: #604d5c; stroke: #8f5068; stroke-width: .6; }
.a7 { fill: #6a5360; stroke: #8c5a58; stroke-width: .6; }
.bl { fill: none; stroke: #7f7272; stroke-width: .6; }
.gh { fill: none; stroke: #fff; stroke-opacity: .08; stroke-width: .7; }
.gv { fill: none; stroke: #fff; stroke-opacity: .11; stroke-width: .7; }
.ylab text { font: 3.400px "Liberation Sans", sans-serif; fill: #c4c4c4; text-anchor: end; }
.xlab text { font: 3.400px "Liberation Sans", sans-serif; fill: #c4c4c4; text-anchor: middle; }
.legend { position: relative; margin: 1px 7px 0 4px; font-size: 3.400px; color: #c9c9c9; }
.lg-head { height: 6px; display: flex; justify-content: flex-end; padding-right: 2px; color: #33a2e5; font-weight: 700; }
.lg-head span { width: 20px; text-align: right; }
.lg { height: 6.700px; display: flex; align-items: center; background: #27282b; padding: 0 2px 0 5px; }
.lg:nth-child(odd) { background: #232427; }
.lg i { width: 3px; height: 1px; margin-right: 2px; }
.lg em { flex: 1; font-style: normal; white-space: nowrap; }
.lg span { width: 20px; text-align: right; }
.s-green { background: #7eb26d; } .s-yellow { background: #eab839; } .s-cyan { background: #6ed0e0; } .s-orange { background: #ef843c; } .s-red { background: #e24d42; } .s-blue { background: #1f78c1; } .s-purple { background: #ba43a9; } .s-violet { background: #705da0; }
.lg-scroll { position: absolute; right: -2px; top: 2px; width: 2px; height: 13px; background: #3b4358; }

/* scrollbars */
.vscroll { width: 13px; background: #dadada; display: flex; flex-direction: column; padding-top: 7px; border-left: 1px solid #efefef; }
.sbtn { height: 10px; background: #fff; display: flex; align-items: center; justify-content: center; flex: none; }
.vthumb { height: 51px; margin-top: 243px; background: #fff; flex: none; }
.sbtn.end { margin-top: auto; }
.tri-up, .tri-down, .tri-l, .tri-r { display: block; width: 0; height: 0; }
.tri-up { border-left: 3px solid transparent; border-right: 3px solid transparent; border-bottom: 3px solid #555; }
.tri-down { border-left: 3px solid transparent; border-right: 3px solid transparent; border-top: 3px solid #555; }
.tri-l { border-top: 2.500px solid transparent; border-bottom: 2.500px solid transparent; border-right: 3px solid #c4c4c4; }
.tri-r { border-top: 2.500px solid transparent; border-bottom: 2.500px solid transparent; border-left: 3px solid #c4c4c4; }
.tri-l.dark { border-right-color: #444; }
.tri-r.dark { border-left-color: #444; }

.sheetbar { height: 15px; background: #e6e6e6; display: flex; align-items: stretch; font-size: 9.500px; color: #444; border-top: 1px solid #d0d0d0; }
.snav { width: 49px; display: flex; align-items: center; gap: 11px; padding-left: 12px; border-right: 1px solid #bdbdbd; }
.stab { padding: 0 4px; display: flex; align-items: center; white-space: nowrap; border-right: 1px solid #c8c8c8; }
.stab.cur { background: #fff; color: #217346; padding: 0 5px; width: 26px; border-right: 0; box-shadow: inset 0 -1px 0 #217346; }
.addsheet { align-self: center; margin-left: 16px; }
.hdots { width: 1px; height: 8px; align-self: center; margin-left: auto; margin-right: 6px; background: repeating-linear-gradient(#9a9a9a 0 1px, transparent 1px 3px); }
.hscroll { width: 162px; margin-right: 13px; background: #d9d9d9; display: flex; }
.hbtn { width: 12px; background: #fff; display: flex; align-items: center; justify-content: center; }
.hthumb { width: 40px; background: #fff; }
.hbtn.right { margin-left: auto; }

.status { flex: 1; background: #f3f3f3; display: flex; align-items: stretch; font-family: "Noto Sans CJK SC", sans-serif; font-size: 8.500px; color: #444; padding-right: 9px; }
.display { margin-left: auto; display: flex; align-items: center; gap: 1px; margin-right: 10px; white-space: nowrap; }
.view { width: 23px; display: flex; align-items: center; justify-content: center; }
.view + .view { margin-left: 2px; }
.zm { width: 8px; display: flex; align-items: center; justify-content: center; font: 10px "Liberation Sans", sans-serif; color: #555; }
.slider { width: 69px; position: relative; align-self: center; height: 1px; background: #9a9a9a; margin: 0 1px; }
.tick { position: absolute; left: 34px; top: -1px; width: 1px; height: 3px; background: #aaa; }
.knob { position: absolute; left: 11px; top: -3px; width: 3px; height: 7px; background: #444; }
.pct40 { width: 23px; display: flex; align-items: center; justify-content: flex-end; font: 8.800px "Liberation Sans", sans-serif; color: #444; }
```
